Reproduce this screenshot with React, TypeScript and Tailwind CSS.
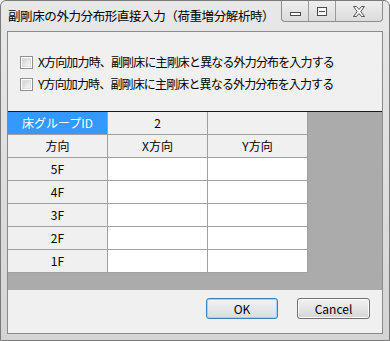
import React from 'react';

const font = { fontFamily: '"Noto Sans CJK JP", "Noto Sans", sans-serif' };

const Checkbox: React.FC<{ label: string }> = ({ label }) => (
  <label className="flex items-center h-[22px] pl-[12px] gap-[5px]">
    <span className="w-[13px] h-[13px] border border-[#8f8f8f] bg-white p-[1px] shrink-0">
      <span className="block w-full h-full border border-[#dedede] bg-gradient-to-br from-[#d2d2d2] to-[#f6f6f6]" />
    </span>
    <span className="text-[12px] tracking-[-0.85px] text-black leading-none">{label}</span>
  </label>
);

const Cell: React.FC<{ className?: string; children?: React.ReactNode }> = ({ className = '', children }) => (
  <div
    className={`h-[23px] border-r border-b border-[#a0a0a0] flex items-center justify-center text-[12px] leading-none ${className}`}
  >
    {children}
  </div>
);

const floors = ['5F', '4F', '3F', '2F', '1F'];

export default function App() {
  return (
    <div style={font} className="w-[390px] h-[341px] bg-white">
      <div className="w-[390px] h-[341px] rounded-t-[6px] border border-[#7a7a7a] bg-gradient-to-b from-[#e8e8e8] to-[#d4d4d4] flex flex-col">
        {/* タイトルバー */}
        <div className="h-[30px] flex items-start justify-between">
          <div className="pl-[7px] pt-[9px] text-[12.5px] leading-none tracking-[-0.4px] text-black whitespace-nowrap">
            副剛床の外力分布形直接入力（荷重増分解析時）
          </div>
          <div className="flex h-[21px] mr-[6px] border border-t-0 border-[#8c8c8c] rounded-b-[4px] bg-gradient-to-b from-[#eeeeee] to-[#dcdcdc] overflow-hidden">
            <div className="w-[27px] flex items-center justify-center border-r border-[#9a9a9a]">
              <span className="mt-[6px] w-[11px] h-[4px] border border-[#4a4a4a] bg-white" />
            </div>
            <div className="w-[27px] flex items-center justify-center border-r border-[#9a9a9a]">
              <span className="w-[10px] h-[9px] border border-[#4a4a4a] bg-white p-[1px]">
                <span className="block w-full h-[3px] border-b border-[#4a4a4a]" />
              </span>
            </div>
            <div className="w-[46px] flex items-center justify-center">
              <svg width="14" height="11" viewBox="0 0 14 11">
                <path
                  d="M1.5 0.5 H4.5 L7 3.5 L9.5 0.5 H12.5 L8.8 5.5 L12.5 10.5 H9.5 L7 7.5 L4.5 10.5 H1.5 L5.2 5.5 Z"
                  fill="#ffffff"
                  stroke="#555555"
                  strokeWidth="1"
                />
              </svg>
            </div>
          </div>
        </div>

        {/* クライアント領域 */}
        <div className="mx-[6px] h-[303px] border border-[#8a8a8a] bg-[#f0f0f0] flex flex-col">
          <div className="h-[79px] pt-[19px] flex flex-col">
            <Checkbox label="X方向加力時、副剛床に主剛床と異なる外力分布を入力する" />
            <Checkbox label="Y方向加力時、副剛床に主剛床と異なる外力分布を入力する" />
          </div>

          <div className="h-[179px] border-t border-[#1a1a1a] bg-[#ababab]">
            <div className="grid grid-cols-[100px_100px_100px] w-[300px]">
              <Cell className="bg-[#3399ff] text-white">床グループID</Cell>
              <Cell className="bg-[#f0f0f0]">2</Cell>
              <Cell className="bg-[#f0f0f0]" />
              <Cell className="bg-[#f0f0f0]">方向</Cell>
              <Cell className="bg-[#f0f0f0]">X方向</Cell>
              <Cell className="bg-[#f0f0f0]">Y方向</Cell>
              {floors.map((f) => (
                <React.Fragment key={f}>
                  <Cell className="bg-[#f0f0f0]">{f}</Cell>
                  <Cell className="bg-white" />
                  <Cell className="bg-white" />
                </React.Fragment>
              ))}
            </div>
          </div>

          <div className="flex-1 flex justify-end items-start pt-[8px] pr-[12px] gap-[19px]">
            <button className="w-[72px] h-[21px] rounded-[3px] border border-[#3c7fb1] bg-gradient-to-b from-[#f0f4f8] to-[#d8dde2] text-[12px] leading-none text-black shadow-[inset_0_0_0_1px_#9fd4f3]">
              OK
            </button>
            <button className="w-[73px] h-[21px] rounded-[3px] border border-[#707070] bg-gradient-to-b from-[#f2f2f2] to-[#d6d6d6] text-[12px] leading-none text-black shadow-[inset_0_0_0_1px_#fcfcfc]">
              Cancel
            </button>
          </div>
        </div>
      </div>
    </div>
  );
}
